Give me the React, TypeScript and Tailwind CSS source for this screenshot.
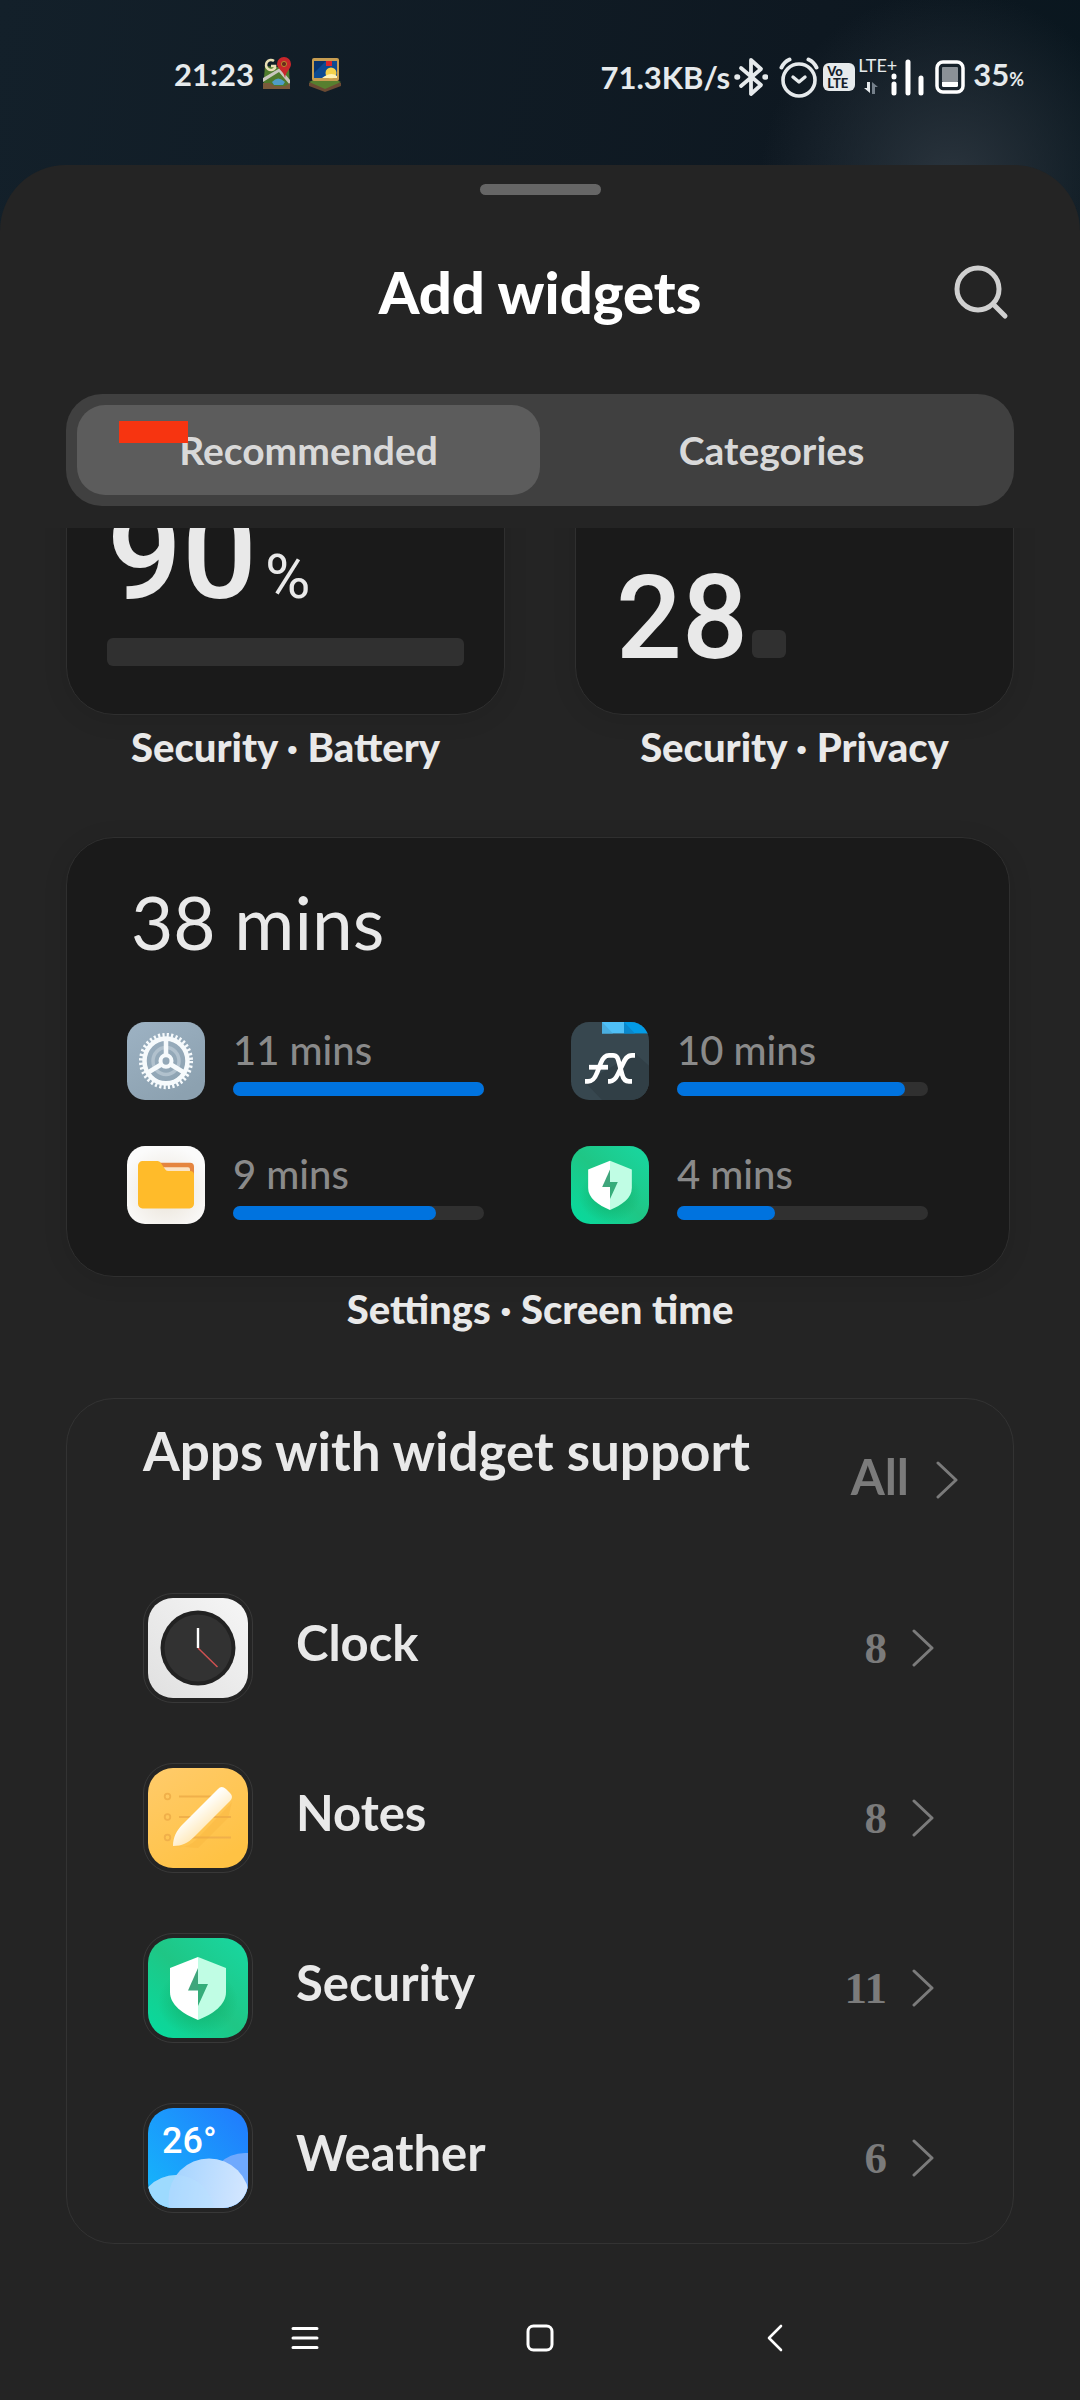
import React from "react";

function MapsIcon() {
  return (
    <svg viewBox="0 0 30 34" className="h-[34px] w-[30px]" aria-label="Maps">
      <path d="M3 10 L27 12 L28 33 L1 33 Z" fill="#4f7a2c" />
      <path d="M1 22 L18 12 L28 24 L28 29 L17 16 L1 26 Z" fill="#c9c6bd" />
      <path d="M10 26 q6 -7 13 0 l-2 3 h-9 z" fill="#4f9cc6" />
      <path d="M1 27 L8 27 L13 30 L23 30 L28 27 V33 H1 Z" fill="#7a5a3a" />
      <path d="M12 5 a5 5 0 1 0 1 7 v-2 h-4" fill="none" stroke="#e8dfb5" strokeWidth="2.6" />
      <path d="M22 1 a7 7 0 0 1 7 7 c0 5 -5 7 -6 14 c-1 -7 -8 -9 -8 -14 a7 7 0 0 1 7 -7z" fill="#c9262b" />
      <circle cx="22" cy="8" r="2.6" fill="#6b2a1c" stroke="#b8862c" />
    </svg>
  );
}

function PictureIcon() {
  return (
    <svg viewBox="0 0 34 36" className="h-9 w-[34px]" aria-label="Gallery">
      <path d="M1 27 L17 20 L33 27 V30 L17 36 L1 30 Z" fill="#6b4a33" />
      <path d="M1 26 L17 19 L33 26 L17 33 Z" fill="#577f2f" />
      <rect x="4" y="2" width="27" height="23" rx="2" fill="#c79d51" />
      <rect x="6" y="5" width="23" height="17" fill="#0c4a92" />
      <path d="M6 5 h12 l-12 12z" fill="#08336f" />
      <rect x="18" y="5" width="6" height="5" fill="#d8242b" />
      <circle cx="23" cy="17" r="5.5" fill="#f4d24c" />
      <path d="M14 22 q9 -7 15 -2 v2z" fill="#fff1b4" />
    </svg>
  );
}

function StatusBar() {
  return (
    <header className="flex h-[165px] items-start justify-between pt-[51px] pr-[56px] pl-[174px] text-[31px] leading-[46px] font-bold text-[#e6eaec]">
      <div className="flex items-center">
        <span>21:23</span>
        <span className="ml-2 flex gap-4">
          <MapsIcon />
          <PictureIcon />
        </span>
      </div>
      <div className="flex items-center">
        <span>71.3KB/s</span>
        <svg viewBox="0 0 34 40" className="ml-1 h-10 w-[34px]" fill="none" stroke="#e6eaec" strokeWidth="3.8" strokeLinejoin="round" strokeLinecap="round" aria-label="Bluetooth">
          <path d="M7 11 L27 28 L17 37 V3 L27 12 L7 29" />
          <path d="M3 20h.5M31 20h.5" strokeWidth="5.5" />
        </svg>
        <svg viewBox="0 0 40 42" className="ml-[11px] h-[42px] w-10" fill="none" stroke="#e6eaec" strokeLinecap="round" strokeLinejoin="round" aria-label="Alarm">
          <circle cx="20" cy="24" r="16" strokeWidth="3.6" />
          <path d="M14 21 L20 26 L26 21" strokeWidth="3.4" />
          <path d="M2.500 11.500 Q5 6 10.500 3.500 M37.500 11.500 Q35 6 29.500 3.500" strokeWidth="4" />
        </svg>
        <span className="ml-1 flex h-[28px] w-[32px] flex-col justify-center rounded-md bg-[#e6eaec] pl-[4px] text-[13px] leading-[12px] font-black text-[#14202a]">
          <span>Vo</span>
          <span>LTE</span>
        </span>
        <div className="ml-[3px] flex h-10 flex-col items-start">
          <span className="text-[18px] leading-[16px] font-normal">LTE+</span>
          <svg viewBox="0 0 16 14" className="mt-2 ml-[5px] h-[14px] w-4" aria-hidden="true">
            <path d="M4 1h3v11L1 7h3z" fill="#e6eaec" />
            <path d="M9 13h3V6h3L9 1z" fill="#75808a" />
          </svg>
        </div>
        <svg viewBox="0 0 36 40" className="-ml-2 h-10 w-9" fill="none" stroke="#fff" strokeWidth="5" strokeLinecap="round" aria-label="Signal">
          <path d="M5 19v1M5 27v9M19 5v31M32 21v15" />
        </svg>
        <svg viewBox="0 0 30 34" className="ml-[10px] h-[34px] w-[30px]" aria-label="Battery">
          <rect x="2" y="2" width="26" height="30" rx="6" fill="none" stroke="#fff" strokeWidth="3.500" />
          <rect x="7" y="7" width="16" height="15" rx="1" fill="#8b9197" />
          <path d="M7 22h16v3.500a1.500 1.500 0 0 1-1.500 1.500h-13a1.500 1.500 0 0 1-1.500-1.500z" fill="#fff" />
        </svg>
        <span className="ml-2">
          35<span className="text-[18px]">%</span>
        </span>
      </div>
    </header>
  );
}

function SettingsIcon() {
  return (
    <svg viewBox="0 0 78 75" preserveAspectRatio="none" className="size-[78px] shrink-0" aria-label="Settings">
      <defs>
        <linearGradient id="setBg" x1="0" y1="0" x2="0.600" y2="1">
          <stop offset="0" stopColor="#9db2c3" />
          <stop offset="1" stopColor="#8ca1b0" />
        </linearGradient>
      </defs>
      <rect width="78" height="75" rx="18" fill="url(#setBg)" />
      <circle cx="39" cy="37.500" r="13" fill="none" stroke="#b1c1cd" strokeWidth="3.500" />
      <circle cx="39" cy="37.500" r="24.800" fill="none" stroke="#f6fafc" strokeWidth="4.500" strokeDasharray="2.150 2.178" />
      <circle cx="39" cy="37.500" r="21.500" fill="none" stroke="#f6fafc" strokeWidth="4.500" />
      <path d="M39 31V17M34 41L21 48.500M44 41L57 48.500" stroke="#f6fafc" strokeWidth="4.500" />
      <circle cx="39" cy="37.500" r="5.500" fill="none" stroke="#f6fafc" strokeWidth="4" />
    </svg>
  );
}

function FilesIcon() {
  return (
    <svg viewBox="0 0 78 75" preserveAspectRatio="none" className="size-[78px] shrink-0" aria-label="Files">
      <defs>
        <radialGradient id="fileBg" cx="0.5" cy="0.6" r="0.6">
          <stop offset="0" stopColor="#e9e2d6" />
          <stop offset="1" stopColor="#fbfbfb" />
        </radialGradient>
      </defs>
      <rect width="78" height="75" rx="18" fill="url(#fileBg)" />
      <path d="M30 16h33a4 4 0 0 1 4 4v12H30z" fill="#e5853f" />
      <path d="M30 20.500h31a2 2 0 0 1 2 2V30H30z" fill="#fbe3c4" />
      <path d="M11 19a4.500 4.500 0 0 1 4.500-4.500h15a4 4 0 0 1 3.200 1.600l4.600 6.400a4 4 0 0 0 3 1.500H63a4 4 0 0 1 4 4v27.500a4.500 4.500 0 0 1-4.500 4.500h-47a4.500 4.500 0 0 1-4.500-4.500z" fill="#ffbb2a" />
    </svg>
  );
}

function FxIcon() {
  return (
    <svg viewBox="0 0 78 75" preserveAspectRatio="none" className="size-[78px] shrink-0" aria-label="FX File Explorer">
      <defs>
        <clipPath id="fxClip">
          <rect width="78" height="75" rx="18" />
        </clipPath>
      </defs>
      <g clipPath="url(#fxClip)">
        <rect width="78" height="75" fill="#37474f" />
        <path d="M14 58 L31 75 H78 V42 L64 30 Z" fill="#313f46" />
        <rect x="31" width="22" height="11" fill="#4fc0f7" />
        <path d="M31 0 L42 11 H31z" fill="#4aaee0" />
        <rect x="53" width="25" height="11" fill="#039be5" />
        <path d="M53 0 L64 11 H53z" fill="#0a88cc" />
      </g>
      <g fill="none" stroke="#fff" strokeWidth="4.600">
        <path d="M14 57h3c5 0 7-3 9-8l4-10c2-5 4-7 8-7h4c4 0 5 3 6 7l3 11c1 4 3 7 7 7h3" />
        <path d="M18 43.500h19" />
        <path d="M64 32h-3c-5 0-7 4-9 8l-5 10c-2 4-4 7-8 7h-2" />
      </g>
    </svg>
  );
}

function ShieldArt({ id }: { id: string }) {
  return (
    <>
      <defs>
        <linearGradient id={id} x1="1" y1="0" x2="0" y2="1">
          <stop offset="0" stopColor="#18d8a2" />
          <stop offset="0.5" stopColor="#1fc685" />
          <stop offset="1" stopColor="#06dca0" />
        </linearGradient>
        <radialGradient id={id + "s"}>
          <stop offset="0" stopColor="#10b06c" />
          <stop offset="1" stopColor="#10b06c" stopOpacity="0" />
        </radialGradient>
      </defs>
      <rect width="100" height="100" rx="25" fill={`url(#${id})`} />
      <ellipse cx="50" cy="64" rx="40" ry="34" fill={`url(#${id}s)`} />
      <path d="M50 19 L22 30 V54 C22 67 35 76 50 82 Z" fill="#fff" />
      <path d="M50 19 L78 30 V54 C78 67 65 76 50 82 Z" fill="#c0fde4" />
      <path d="M50 30 V46 H60 L50 68 Z" fill="#35ad7a" />
      <path d="M50 30 V52.500 H40 Z" fill="#3fa67c" />
    </>
  );
}

function SecuritySmallIcon() {
  return (
    <svg viewBox="0 0 100 100" className="size-[78px] shrink-0" aria-label="Security">
      <ShieldArt id="shieldSmall" />
    </svg>
  );
}

function ClockArt() {
  return (
    <>
      <defs>
        <linearGradient id="clkBg" x1="1" y1="0" x2="0" y2="1">
          <stop offset="0" stopColor="#f6f6f6" />
          <stop offset="1" stopColor="#e0e0e0" />
        </linearGradient>
      </defs>
      <rect width="100" height="100" rx="25" fill="url(#clkBg)" />
      <circle cx="50" cy="50" r="37.500" fill="#222" />
      <circle cx="50" cy="50" r="33.500" fill="#323232" />
      <path d="M50 50 L69.500 69" stroke="#cf5151" strokeWidth="1.500" />
      <path d="M50 50V30" stroke="#fff" strokeWidth="2.400" />
    </>
  );
}

function NotesArt() {
  return (
    <>
      <defs>
        <linearGradient id="noteBg" x1="0" y1="0" x2="0.600" y2="1">
          <stop offset="0" stopColor="#ffcb6b" />
          <stop offset="1" stopColor="#ffc244" />
        </linearGradient>
        <linearGradient id="pen" x1="0.300" y1="0.300" x2="0.700" y2="0.800">
          <stop offset="0.200" stopColor="#fffefa" />
          <stop offset="1" stopColor="#ffe0a0" />
        </linearGradient>
      </defs>
      <rect width="100" height="100" rx="25" fill="url(#noteBg)" />
      <g fill="none" stroke="#f0b04a" strokeWidth="1.800">
        <circle cx="19.500" cy="28.500" r="2.800" />
        <circle cx="19.500" cy="49" r="2.800" />
        <circle cx="19.500" cy="69.500" r="2.800" />
        <path d="M31 28.500H83M31 49H83M31 69.500H83" />
      </g>
      <path d="M25 78 Q38 82 48 72 L84 34 L80 50 L50 80 Z" fill="#f5aa35" opacity="0.25" />
      <path d="M25 78 C25 69 29 62 34 57 L70 21 Q73.500 17 78 21 L82 25 Q86 29 82 33 L46 69 C40 75 34 78 25 78 Z" fill="url(#pen)" />
    </>
  );
}

function WeatherArt() {
  return (
    <>
      <defs>
        <linearGradient id="sky" x1="0" y1="0.700" x2="0.800" y2="0">
          <stop offset="0" stopColor="#16b0fb" />
          <stop offset="1" stopColor="#2080fd" />
        </linearGradient>
        <linearGradient id="cloud" x1="0" y1="0.500" x2="1" y2="0.700">
          <stop offset="0" stopColor="#a5d4ff" />
          <stop offset="1" stopColor="#d8e8ff" />
        </linearGradient>
        <clipPath id="wClip">
          <rect width="100" height="100" rx="25" />
        </clipPath>
      </defs>
      <g clipPath="url(#wClip)">
        <rect width="100" height="100" fill="url(#sky)" />
        <circle cx="97" cy="82" r="37" fill="#6fa9fd" />
        <circle cx="28" cy="105" r="38" fill="#8fd6fe" />
        <circle cx="61" cy="91" r="40.500" fill="url(#cloud)" />
        <circle cx="28" cy="105" r="38" fill="#b7e1ff" opacity="0.35" />
      </g>
      <text x="14" y="45" fill="#fff" fontSize="36" fontWeight="500" fontFamily="Roboto, sans-serif">26°</text>
    </>
  );
}

function Chevron() {
  return (
    <svg viewBox="0 0 22 38" className="h-[38px] w-[22px] shrink-0" fill="none" stroke="currentColor" strokeWidth="3" strokeLinecap="round" strokeLinejoin="round" aria-hidden="true">
      <path d="M2 2 L20 19 L2 36" />
    </svg>
  );
}

const usage = [
  { icon: <SettingsIcon />, time: "11 mins", fill: "w-full" },
  { icon: <FxIcon />, time: "10 mins", fill: "w-[91%]" },
  { icon: <FilesIcon />, time: "9 mins", fill: "w-[81%]" },
  { icon: <SecuritySmallIcon />, time: "4 mins", fill: "w-[39%]" },
];

const apps = [
  { name: "Clock", count: 8, art: <ClockArt /> },
  { name: "Notes", count: 8, art: <NotesArt /> },
  { name: "Security", count: 11, art: <ShieldArt id="shieldLarge" /> },
  { name: "Weather", count: 6, art: <WeatherArt /> },
];

function Caption({ children }: { children: React.ReactNode }) {
  return <p className="mt-3 text-center text-[40px] leading-[40px] font-black">{children}</p>;
}

export default function App() {
  return (
    <div className="flex min-h-screen flex-col bg-[#0d1a22] bg-[radial-gradient(circle_at_88%_180px,#2a343d_0,transparent_190px),linear-gradient(100deg,#13202a,#0e1821_55%,#04151c)] font-[Lato,sans-serif] text-[#e9e9e9]">
      <StatusBar />
      <main className="flex grow flex-col rounded-t-[66px] bg-[#242424] pt-[19px]">
        <div className="mx-auto h-[11px] w-[121px] rounded-full bg-[#666]" />

        <div className="relative mt-[52px] flex h-[90px] items-center justify-center">
          <h1 className="text-[58px] leading-[72px] font-black text-white">Add widgets</h1>
          <button type="button" aria-label="Search" className="absolute right-[71px]">
            <svg viewBox="0 0 56 56" className="size-14" fill="none" stroke="#d0d0d0" strokeWidth="5" strokeLinecap="round">
              <circle cx="25" cy="25" r="21" />
              <path d="M40 40 L52 52" />
            </svg>
          </button>
        </div>

        <div role="tablist" className="mx-[66px] mt-[57px] grid grid-cols-2 rounded-[36px] bg-[#404040] p-[11px] text-[39px] font-bold text-[#d9d9d9]">
          <button type="button" role="tab" aria-selected="true" className="relative h-[90px] rounded-[28px] bg-[#5c5c5c]">
            Recommended
            <span className="absolute top-4 left-[42px] h-[22px] w-[69px] bg-[#f73410]" />
          </button>
          <button type="button" role="tab" aria-selected="false" className="h-[90px]">
            Categories
          </button>
        </div>

        <div className="mt-[22px] overflow-hidden px-[66px]">
          <section className="-mt-[253px] grid grid-cols-2 gap-[70px]">
            <div>
              <div className="flex h-[440px] flex-col justify-end rounded-[48px] border border-[#2f2f2f] bg-[#1a1a1a] px-10 pb-[48px] shadow-[0_4px_24px_rgba(0,0,0,0.1)]">
                <div className="flex items-baseline gap-2 font-[Roboto,sans-serif] text-[132px] leading-[120px] font-medium">
                  90<span className="text-[62px] leading-[62px] font-normal">%</span>
                </div>
                <div className="mt-[25px] h-7 rounded-md bg-[#303030]" />
              </div>
              <Caption>Security · Battery</Caption>
            </div>
            <div>
              <div className="flex h-[440px] items-end rounded-[48px] border border-[#2f2f2f] bg-[#1a1a1a] px-10 pb-[53px] shadow-[0_4px_24px_rgba(0,0,0,0.1)]">
                <div className="flex items-baseline gap-1">
                  <span className="font-[Roboto,sans-serif] text-[116px] leading-[86px] font-medium">28</span>
                  <span className="h-7 w-[34px] rounded-md bg-[#303030]" />
                </div>
              </div>
              <Caption>Security · Privacy</Caption>
            </div>
          </section>

          <section className="mt-[70px]">
            <div className="mr-1 rounded-[48px] border border-[#2f2f2f] bg-[#1a1a1a] pt-[44px] pr-[81px] pb-[52px] pl-[60px] shadow-[0_4px_24px_rgba(0,0,0,0.1)]">
              <h2 className="pl-1 text-[73px] leading-[80px]">38 mins</h2>
              <div className="mt-[60px] grid grid-cols-2 gap-x-[87px] gap-y-[46px]">
                {usage.map((item) => (
                  <div key={item.time} className="flex gap-7">
                    {item.icon}
                    <div className="grow pt-2">
                      <p className="text-[40px] leading-[40px] font-medium text-[#8a8a8a]">{item.time}</p>
                      <div className="mt-3 h-[14px] rounded-full bg-[#303030]">
                        <div className={`h-full rounded-full bg-[#0073df] ${item.fill}`} />
                      </div>
                    </div>
                  </div>
                ))}
              </div>
            </div>
            <Caption>Settings · Screen time</Caption>
          </section>

          <section className="mt-[69px] rounded-[48px] border border-[#333] pr-[79px] pl-[76px]">
            <div className="flex h-[164px] items-start justify-between pt-[22px]">
              <h2 className="text-[53px] leading-[60px] font-bold">Apps with widget support</h2>
              <button type="button" className="mt-[34px] -mr-6 flex h-[50px] items-center gap-[27px] text-[#7b7b7b]">
                <span className="pb-2 text-[49px] leading-[50px] font-bold">All</span>
                <Chevron />
              </button>
            </div>
            <ul>
              {apps.map((app) => (
                <li key={app.name}>
                  <button type="button" className="flex h-[170px] w-full items-center">
                    <span className="rounded-[30px] border border-[#383838] p-1">
                      <svg viewBox="0 0 100 100" className="size-[100px]" aria-hidden="true">
                        {app.art}
                      </svg>
                    </span>
                    <span className="ml-[43px] pb-3 text-[49px] leading-[50px] font-bold">{app.name}</span>
                    <span className="mr-[25px] ml-auto font-['Liberation_Serif',serif] text-[45px] leading-[50px] font-bold text-[#7b7b7b]">{app.count}</span>
                    <span className="text-[#7b7b7b]">
                      <Chevron />
                    </span>
                  </button>
                </li>
              ))}
            </ul>
          </section>
        </div>

        <nav className="mt-auto flex h-[124px] items-center justify-center gap-[187px]">
          <button type="button" aria-label="Recent apps" className="flex size-12 items-center justify-center">
            <svg viewBox="0 0 28 28" className="size-7" stroke="#fff" strokeWidth="3" strokeLinecap="round">
              <path d="M2 4.500h24M2 14h24M2 23.500h24" />
            </svg>
          </button>
          <button type="button" aria-label="Home" className="flex size-12 items-center justify-center">
            <svg viewBox="0 0 28 28" className="size-7" fill="none" stroke="#fff" strokeWidth="3">
              <rect x="2" y="2" width="24" height="24" rx="5.500" />
            </svg>
          </button>
          <button type="button" aria-label="Back" className="flex size-12 items-center justify-center">
            <svg viewBox="0 0 16 28" className="h-7 w-4" fill="none" stroke="#fff" strokeWidth="2.600" strokeLinecap="round" strokeLinejoin="round">
              <path d="M14 2 L2 14 L14 26" />
            </svg>
          </button>
        </nav>
      </main>
    </div>
  );
}
